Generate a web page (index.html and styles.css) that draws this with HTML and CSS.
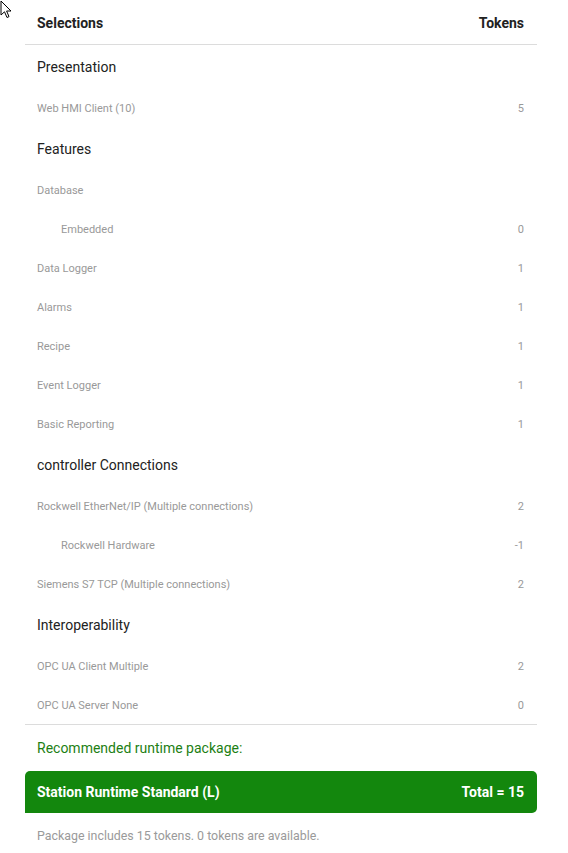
FILE: index.html
```html
<!DOCTYPE html>
<html>
<head>
<meta charset="utf-8">
<link rel="stylesheet" href="styles.css">
</head>
<body>
<svg class="cursor" width="14" height="20" viewBox="0 0 14 20"><path d="M1 1 L1 15 L4.5 11.8 L7 17.5 L9 16.6 L6.6 11 L11 11 Z" fill="#fff" stroke="#000" stroke-width="1"/></svg>
<div class="panel">
  <div class="head row">
    <span>Selections</span><span>Tokens</span>
  </div>
  <div class="section">Presentation</div>
  <div class="item"><span>Web HMI Client (10)</span><span>5</span></div>
  <div class="section">Features</div>
  <div class="item"><span>Database</span><span></span></div>
  <div class="item sub"><span>Embedded</span><span>0</span></div>
  <div class="item"><span>Data Logger</span><span>1</span></div>
  <div class="item"><span>Alarms</span><span>1</span></div>
  <div class="item"><span>Recipe</span><span>1</span></div>
  <div class="item"><span>Event Logger</span><span>1</span></div>
  <div class="item"><span>Basic Reporting</span><span>1</span></div>
  <div class="section">controller Connections</div>
  <div class="item"><span>Rockwell EtherNet/IP (Multiple connections)</span><span>2</span></div>
  <div class="item sub"><span>Rockwell Hardware</span><span>-1</span></div>
  <div class="item"><span>Siemens S7 TCP (Multiple connections)</span><span>2</span></div>
  <div class="section">Interoperability</div>
  <div class="item"><span>OPC UA Client Multiple</span><span>2</span></div>
  <div class="item last"><span>OPC UA Server None</span><span>0</span></div>
  <div class="recommend">Recommended runtime package:</div>
  <div class="package"><span>Station Runtime Standard (L)</span><span>Total = 15</span></div>
  <div class="note">Package includes 15 tokens. 0 tokens are available.</div>
</div>
</body>
</html>
```
FILE: styles.css
```css
html, body {
  margin: 0;
  padding: 0;
  background: #fff;
}
* {
  box-sizing: border-box;
}
body {
  font-family: Roboto, "Liberation Sans", sans-serif;
  position: relative;
}
.cursor {
  position: absolute;
  left: 0;
  top: 0;
}
.panel {
  width: 512px;
  margin-left: 25px;
}
.row, .item, .package {
  display: flex;
  justify-content: space-between;
  align-items: center;
}
.head {
  height: 45px;
  padding: 2px 13px 0 12px;
  font-size: 14px;
  font-weight: 700;
  color: #222;
  border-bottom: 1px solid #dcdcdc;
}
.section {
  height: 43px;
  display: flex;
  align-items: center;
  padding-left: 12px;
  font-size: 14px;
  color: #222;
}
.section:first-of-type {
  height: 42px;
}
.item {
  height: 39px;
  padding: 2px 13px 0 12px;
  font-size: 11px;
  color: #999;
}
.item.sub {
  padding-left: 36px;
}
.item.last {
  border-bottom: 1px solid #dcdcdc;
  height: 40px;
}
.recommend {
  height: 46px;
  display: flex;
  align-items: center;
  padding-left: 12px;
  font-size: 14px;
  color: #1d7f14;
}
.package {
  height: 42px;
  padding: 0 13px 0 12px;
  background: #13870d;
  color: #fff;
  font-size: 14px;
  font-weight: 700;
  border-radius: 5px 5px 5px 0;
}
.note {
  height: 42px;
  display: flex;
  align-items: center;
  padding: 2px 0 0 12px;
  font-size: 12.4px;
  color: #9a9a9a;
}
```
